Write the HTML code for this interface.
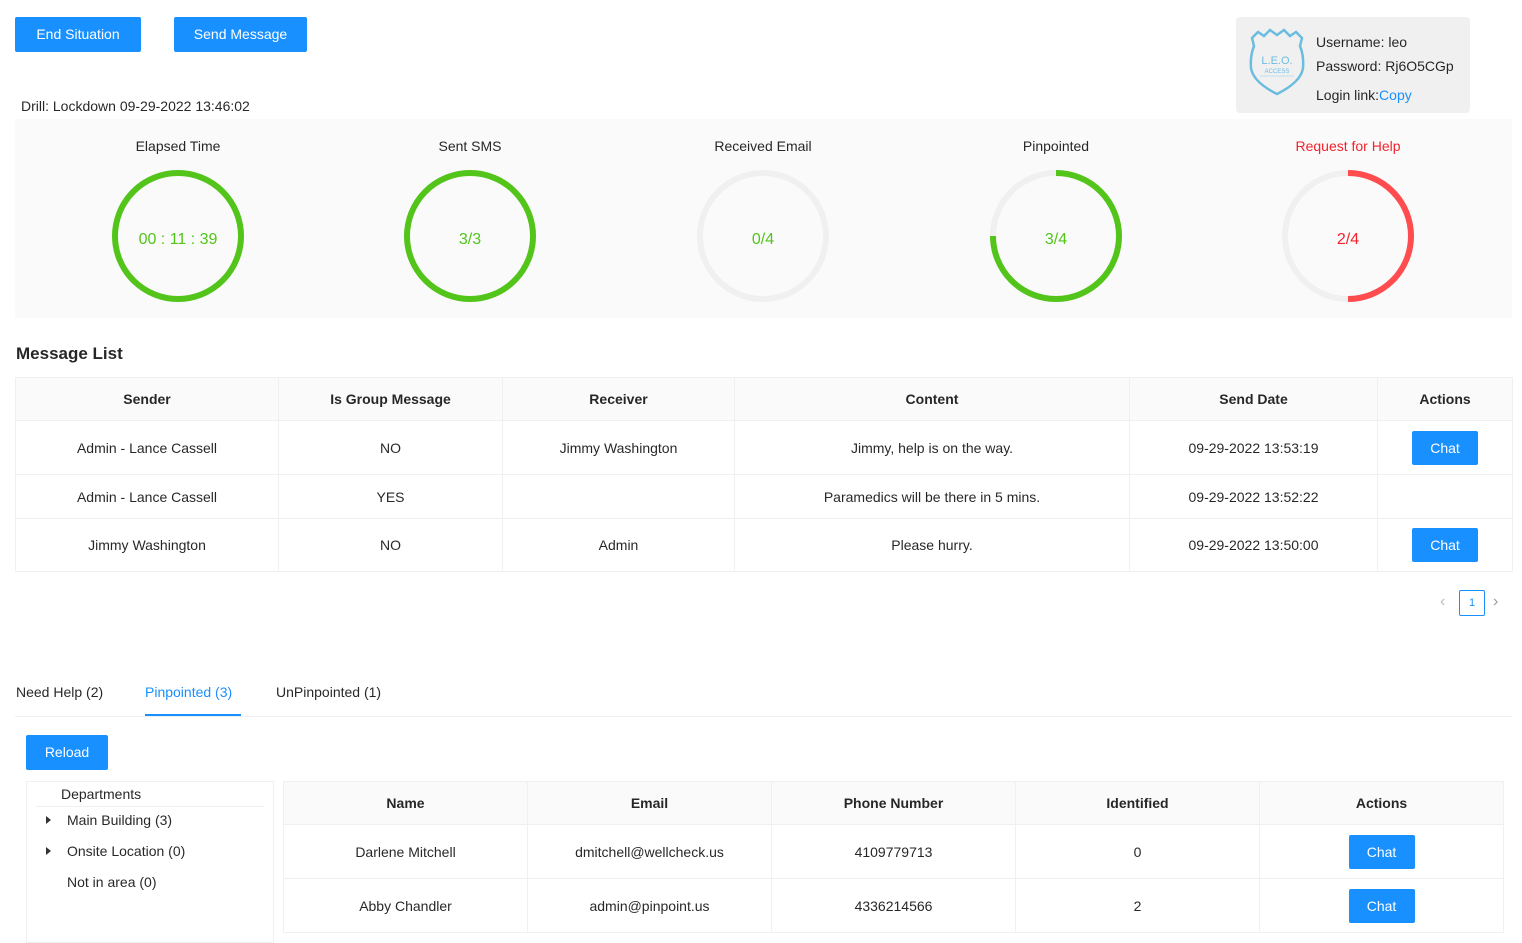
<!DOCTYPE html><html><head><style>
body{margin:0;width:1522px;height:936px;overflow:hidden;background:#fff;font-family:"Liberation Sans",sans-serif;font-size:14px;color:rgba(0,0,0,.85);position:relative}
.a{position:absolute}
.btn{position:absolute;background:#1890ff;color:#fff;border-radius:2px;text-align:center;font-size:14px}
table{border-collapse:collapse;position:absolute;table-layout:fixed}
td,th{border:1px solid #f0f0f0;text-align:center;padding:0}
th{background:#fafafa;font-weight:bold;color:rgba(0,0,0,.85)}
.cb{display:inline-block;background:#1890ff;color:#fff;width:66px;height:34px;line-height:34px;border-radius:2px}
.lbl{position:absolute;width:200px;text-align:center;top:138px}
.val{position:absolute;width:200px;text-align:center;top:231px;font-size:16px;color:#52c41a}
.tri{position:absolute;width:0;height:0;border-left:5px solid #333;border-top:4px solid transparent;border-bottom:4px solid transparent}
</style></head><body>
<div class="btn" style="left:15px;top:17px;width:126px;height:35px;line-height:35px">End Situation</div>
<div class="btn" style="left:174px;top:17px;width:133px;height:35px;line-height:35px">Send Message</div>
<div class="a" style="left:1236px;top:17px;width:234px;height:96px;background:#f0f0f0;border-radius:4px"></div>
<svg class="a" style="left:1248px;top:28px" width="58" height="70" viewBox="0 0 58 70"><path d="M4 10 L10 4 L16 8 L22 2 L29 7 L36 2 L42 8 L48 4 L54 10 L52 18 Q56 28 55 40 Q53 54 29 66 Q5 54 3 40 Q2 28 6 18 Z" fill="none" stroke="#6bbde0" stroke-width="2.5"/><text x="29" y="36" font-size="11" fill="#6bbde0" text-anchor="middle" font-family="Liberation Sans">L.E.O.</text><text x="29" y="45" font-size="6" fill="#6bbde0" text-anchor="middle" font-family="Liberation Sans">ACCESS</text><line x1="12" y1="48" x2="46" y2="48" stroke="#bfe0ef"/></svg>
<div class="a" style="left:1316px;top:30px;line-height:24px">Username: leo<br>Password: Rj6O5CGp</div>
<div class="a" style="left:1316px;top:87px">Login link:<span style="color:#1890ff">Copy</span></div>
<div class="a" style="left:21px;top:98px">Drill: Lockdown 09-29-2022 13:46:02</div>
<div class="a" style="left:15px;top:119px;width:1497px;height:199px;background:#fafafa"></div>
<div class="lbl" style="left:78px">Elapsed Time</div><div class="lbl" style="left:370px">Sent SMS</div><div class="lbl" style="left:663px">Received Email</div><div class="lbl" style="left:956px">Pinpointed</div><div class="lbl" style="left:1248px;color:#f5222d">Request for Help</div>
<svg class="a" style="left:0;top:0" width="1522" height="330">
<g fill="none" stroke-width="6">
<circle cx="178" cy="236" r="63" stroke="#52c41a"/>
<circle cx="470" cy="236" r="63" stroke="#52c41a"/>
<circle cx="763" cy="236" r="63" stroke="#f0f0f0"/>
<circle cx="1056" cy="236" r="63" stroke="#f0f0f0"/>
<path d="M1056 173 A63 63 0 1 1 993 236" stroke="#52c41a"/>
<circle cx="1348" cy="236" r="63" stroke="#f0f0f0"/>
<path d="M1348 173 A63 63 0 0 1 1348 299" stroke="#ff4d4f"/>
</g></svg>
<div class="val" style="left:78px">00 : 11 : 39</div><div class="val" style="left:370px">3/3</div><div class="val" style="left:663px">0/4</div><div class="val" style="left:956px">3/4</div><div class="val" style="left:1248px;color:#f5222d">2/4</div>
<div class="a" style="left:16px;top:344px;font-size:17px;font-weight:bold">Message List</div>
<table style="left:15px;top:377px;width:1497px">
<colgroup><col style="width:263px"><col style="width:224px"><col style="width:232px"><col style="width:395px"><col style="width:248px"><col style="width:135px"></colgroup>
<tr style="height:43px"><th>Sender</th><th>Is Group Message</th><th>Receiver</th><th>Content</th><th>Send Date</th><th>Actions</th></tr>
<tr style="height:54px"><td>Admin - Lance Cassell</td><td>NO</td><td>Jimmy Washington</td><td>Jimmy, help is on the way.</td><td>09-29-2022 13:53:19</td><td><span class="cb">Chat</span></td></tr>
<tr style="height:44px"><td>Admin - Lance Cassell</td><td>YES</td><td></td><td>Paramedics will be there in 5 mins.</td><td>09-29-2022 13:52:22</td><td></td></tr>
<tr style="height:53px"><td>Jimmy Washington</td><td>NO</td><td>Admin</td><td>Please hurry.</td><td>09-29-2022 13:50:00</td><td><span class="cb">Chat</span></td></tr>
</table>
<div class="a" style="left:1440px;top:593px;color:#bbb;font-size:16px">‹</div>
<div class="a" style="left:1459px;top:590px;width:24px;height:24px;border:1px solid #1890ff;border-radius:2px;color:#1890ff;font-size:11px;text-align:center;line-height:24px">1</div>
<div class="a" style="left:1493px;top:593px;color:#999;font-size:16px">›</div>
<div class="a" style="left:16px;top:684px">Need Help (2)</div>
<div class="a" style="left:145px;top:684px;color:#1890ff">Pinpointed (3)</div>
<div class="a" style="left:276px;top:684px">UnPinpointed (1)</div>
<div class="a" style="left:15px;top:716px;width:1497px;height:1px;background:#f0f0f0"></div>
<div class="a" style="left:145px;top:714px;width:96px;height:2px;background:#1890ff"></div>
<div class="btn" style="left:26px;top:735px;width:82px;height:35px;line-height:35px">Reload</div>
<div class="a" style="left:26px;top:781px;width:246px;height:160px;border:1px solid #f0f0f0"></div>
<div class="a" style="left:61px;top:786px">Departments</div>
<div class="a" style="left:36px;top:806px;width:228px;height:1px;background:#f0f0f0"></div>
<div class="tri" style="left:46px;top:816px"></div><div class="a" style="left:67px;top:812px">Main Building (3)</div>
<div class="tri" style="left:46px;top:847px"></div><div class="a" style="left:67px;top:843px">Onsite Location (0)</div>
<div class="a" style="left:67px;top:874px">Not in area (0)</div>
<table style="left:283px;top:781px;width:1221px">
<colgroup><col><col><col><col><col></colgroup>
<tr style="height:43px"><th>Name</th><th>Email</th><th>Phone Number</th><th>Identified</th><th>Actions</th></tr>
<tr style="height:54px"><td>Darlene Mitchell</td><td>dmitchell@wellcheck.us</td><td>4109779713</td><td>0</td><td><span class="cb">Chat</span></td></tr>
<tr style="height:54px"><td>Abby Chandler</td><td>admin@pinpoint.us</td><td>4336214566</td><td>2</td><td><span class="cb">Chat</span></td></tr>
</table>
</body></html>
